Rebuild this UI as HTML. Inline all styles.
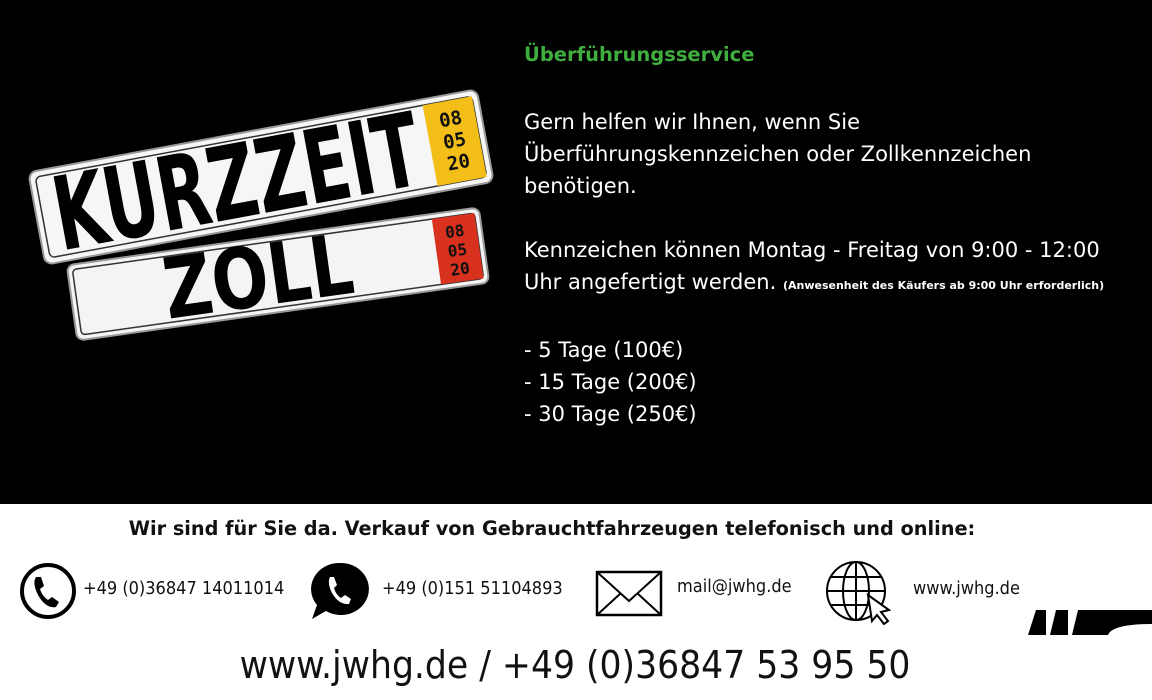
<!DOCTYPE html>
<html><head><meta charset="utf-8"><style>
body{margin:0;width:1152px;height:700px;overflow:hidden;background:#fff;font-family:"DejaVu Sans","Liberation Sans",sans-serif;}
.top{position:absolute;left:0;top:0;width:1152px;height:504px;background:#000;}
.txt{position:absolute;left:524px;color:#fff;font-size:21px;line-height:32px;white-space:nowrap;}
.h{position:absolute;left:524px;top:43px;color:#3fae3f;font-weight:bold;font-size:19.5px;}
.small{font-size:11px;font-weight:bold;}
.bh{position:absolute;top:517px;left:0;width:1104px;text-align:center;font-weight:bold;font-size:19.3px;color:#111;}
.c{position:absolute;top:578px;font-family:"DejaVu Sans Condensed","Liberation Sans Narrow",sans-serif;font-size:18px;color:#111;}
.big{position:absolute;top:643px;left:0;width:1150px;text-align:center;font-family:"DejaVu Sans Condensed","Liberation Sans Narrow",sans-serif;font-size:38.5px;color:#111;}
</style></head><body>
<div class="top">
<svg width="520" height="380" style="position:absolute;left:0;top:0">
 <g transform="translate(278,274) rotate(-8)">
  <rect x="-208" y="-38" width="416" height="76" rx="7" fill="#f4f4f4" stroke="#999" stroke-width="2"/>
  <rect x="-203" y="-33" width="406" height="66" rx="4" fill="none" stroke="#333" stroke-width="1.5"/>
  <rect x="160" y="-33" width="43" height="66" fill="#d8321f"/>
  <text x="181" y="-12" font-family="DejaVu Sans Mono" font-weight="bold" font-size="16" text-anchor="middle" fill="#111">08</text>
  <text x="181" y="7" font-family="DejaVu Sans Mono" font-weight="bold" font-size="16" text-anchor="middle" fill="#111">05</text>
  <text x="181" y="26" font-family="DejaVu Sans Mono" font-weight="bold" font-size="16" text-anchor="middle" fill="#111">20</text>
  <text x="-20" y="29" font-family="DejaVu Sans Condensed" font-weight="bold" font-size="84" text-anchor="middle" fill="#000" textLength="190" lengthAdjust="spacingAndGlyphs">ZOLL</text>
 </g>
 <g transform="translate(261,177) rotate(-10.5)">
  <rect x="-228" y="-47" width="456" height="94" rx="8" fill="#f6f6f6" stroke="#999" stroke-width="2"/>
  <rect x="-222" y="-41" width="444" height="82" rx="5" fill="none" stroke="#333" stroke-width="1.5"/>
  <rect x="172" y="-41" width="50" height="82" fill="#f4be18"/>
  <text x="197" y="-16" font-family="DejaVu Sans Mono" font-weight="bold" font-size="19" text-anchor="middle" fill="#111">08</text>
  <text x="197" y="6" font-family="DejaVu Sans Mono" font-weight="bold" font-size="19" text-anchor="middle" fill="#111">05</text>
  <text x="197" y="28" font-family="DejaVu Sans Mono" font-weight="bold" font-size="19" text-anchor="middle" fill="#111">20</text>
  <text x="-25" y="36" font-family="DejaVu Sans Condensed" font-weight="bold" font-size="102" text-anchor="middle" fill="#000" textLength="370" lengthAdjust="spacingAndGlyphs">KURZZEIT</text>
 </g>
</svg>
<div class="h">Überführungsservice</div>
<div class="txt" style="top:106px">Gern helfen wir Ihnen, wenn Sie<br>Überführungskennzeichen oder Zollkennzeichen<br>benötigen.</div>
<div class="txt" style="top:234px">Kennzeichen können Montag - Freitag von 9:00 - 12:00<br>Uhr angefertigt werden. <span class="small">(Anwesenheit des Käufers ab 9:00 Uhr erforderlich)</span></div>
<div class="txt" style="top:334px">- 5 Tage (100€)<br>- 15 Tage (200€)<br>- 30 Tage (250€)</div>
</div>
<div class="bh">Wir sind für Sie da. Verkauf von Gebrauchtfahrzeugen telefonisch und online:</div>
<svg width="1152" height="80" style="position:absolute;left:0;top:555px">
 <circle cx="48" cy="36" r="26" fill="none" stroke="#000" stroke-width="4"/>
 <path d="M36 22 q-4 6 2 18 q8 14 18 12 l3-5 -7-5 -4 3 q-6-4 -8-11 l4-3 -3-9z" fill="#000"/>
 <path d="M340 8 a28 26 0 1 1 -14 48 l-14 8 5-14 a28 26 0 0 1 23-42z" fill="#000"/>
 <path d="M330 22 q-3 6 2 16 q7 12 17 11 l2-5 -6-4 -4 3 q-5-3 -7-10 l3-3 -3-8z" fill="#fff"/>
 <rect x="597" y="17" width="64" height="43" fill="none" stroke="#000" stroke-width="2.5"/>
 <path d="M597 17 L629 46 L661 17 M597 60 L621 38 M661 60 L637 38" fill="none" stroke="#000" stroke-width="2"/>
 <circle cx="856" cy="36" r="29" fill="none" stroke="#000" stroke-width="2"/>
 <ellipse cx="856" cy="36" rx="13" ry="29" fill="none" stroke="#000" stroke-width="2"/>
 <path d="M856 7 v58 M827 36 h58 M831 22 h50 M831 50 h50" stroke="#000" stroke-width="2"/>
 <path d="M868 40 l4 26 5-6 7 9 4-3 -7-9 8-2z" fill="#fff" stroke="#000" stroke-width="2"/>
 <path d="M1028 80 l8-25 h10 v25z M1050 80 l6-25 h12 v25z M1072 80 l6-25 h74 v14 q-40 0 -44 11z" fill="#000"/>
</svg>
<div class="c" style="left:83px">+49 (0)36847 14011014</div>
<div class="c" style="left:382px">+49 (0)151 51104893</div>
<div class="c" style="left:677px;top:576px">mail@jwhg.de</div>
<div class="c" style="left:913px">www.jwhg.de</div>
<div class="big">www.jwhg.de / +49 (0)36847 53 95 50</div>
</body></html>
